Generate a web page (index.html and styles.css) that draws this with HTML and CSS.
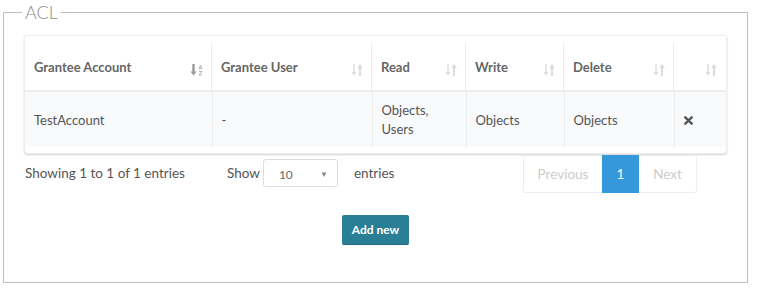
FILE: index.html
```html
<!DOCTYPE html>
<html>
<head>
<meta charset="utf-8">
<link rel="stylesheet" href="styles.css">
</head>
<body>
<fieldset class="acl">
  <legend class="acl-legend">ACL</legend>
  <div class="card">
    <table class="grid">
      <thead>
        <tr>
          <th class="c1"><span>Grantee Account</span><span class="sort active">
            <svg width="14" height="14" viewBox="0 0 14 14"><path d="M3.5 1v9" stroke="#9a9a9a" stroke-width="2.4"/><path d="M0.5 8.5h6l-3 4z" fill="#9a9a9a"/><path d="M9 6.5l1.5-4.5 1.5 4.5M9.6 5h1.8" stroke="#b5b5b5" stroke-width="1" fill="none"/><path d="M9 8.5h3l-3 3.5h3" stroke="#b5b5b5" stroke-width="1" fill="none"/></svg>
          </span></th>
          <th class="c2"><span>Grantee User</span><span class="sort"><svg width="14" height="14" viewBox="0 0 14 14"><path d="M4 1v9" stroke="#dcdcdc" stroke-width="1.4"/><path d="M1.5 9h5l-2.5 3.5z" fill="#dcdcdc"/><path d="M10 13V4" stroke="#dcdcdc" stroke-width="2.2"/><path d="M7 5h6l-3-4z" fill="#dcdcdc"/></svg></span></th>
          <th class="c3"><span>Read</span><span class="sort"><svg width="14" height="14" viewBox="0 0 14 14"><path d="M4 1v9" stroke="#dcdcdc" stroke-width="1.4"/><path d="M1.5 9h5l-2.5 3.5z" fill="#dcdcdc"/><path d="M10 13V4" stroke="#dcdcdc" stroke-width="2.2"/><path d="M7 5h6l-3-4z" fill="#dcdcdc"/></svg></span></th>
          <th class="c4"><span>Write</span><span class="sort"><svg width="14" height="14" viewBox="0 0 14 14"><path d="M4 1v9" stroke="#dcdcdc" stroke-width="1.4"/><path d="M1.5 9h5l-2.5 3.5z" fill="#dcdcdc"/><path d="M10 13V4" stroke="#dcdcdc" stroke-width="2.2"/><path d="M7 5h6l-3-4z" fill="#dcdcdc"/></svg></span></th>
          <th class="c5"><span>Delete</span><span class="sort"><svg width="14" height="14" viewBox="0 0 14 14"><path d="M4 1v9" stroke="#dcdcdc" stroke-width="1.4"/><path d="M1.5 9h5l-2.5 3.5z" fill="#dcdcdc"/><path d="M10 13V4" stroke="#dcdcdc" stroke-width="2.2"/><path d="M7 5h6l-3-4z" fill="#dcdcdc"/></svg></span></th>
          <th class="c6"><span></span><span class="sort"><svg width="14" height="14" viewBox="0 0 14 14"><path d="M4 1v9" stroke="#dcdcdc" stroke-width="1.4"/><path d="M1.5 9h5l-2.5 3.5z" fill="#dcdcdc"/><path d="M10 13V4" stroke="#dcdcdc" stroke-width="2.2"/><path d="M7 5h6l-3-4z" fill="#dcdcdc"/></svg></span></th>
        </tr>
      </thead>
      <tbody>
        <tr>
          <td>TestAccount</td>
          <td>-</td>
          <td>Objects,<br>Users</td>
          <td>Objects</td>
          <td>Objects</td>
          <td class="del"><svg width="9" height="9" viewBox="0 0 9 9"><path d="M1.3 1.3l6.4 6.4M7.7 1.3l-6.4 6.4" stroke="#555" stroke-width="2.4" stroke-linecap="round"/></svg></td>
        </tr>
      </tbody>
    </table>
  </div>
  <div class="footer">
    <div class="info">Showing 1 to 1 of 1 entries</div>
    <div class="length">
      <span>Show</span>
      <div class="select"><span>10</span><span class="caret">▼</span></div>
      <span>entries</span>
    </div>
    <div class="pager">
      <span class="pg disabled">Previous</span>
      <span class="pg current">1</span>
      <span class="pg disabled">Next</span>
    </div>
  </div>
  <div class="actions">
    <button class="btn">Add new</button>
  </div>
</fieldset>
</body>
</html>
```
FILE: styles.css
```css
* { box-sizing: border-box; }
body {
  margin: 0;
  padding: 2px 13px 0 3px;
  font-family: "Lato", "Open Sans", sans-serif;
  color: #555;
  background: #fff;
}
.acl {
  margin: 0;
  border: 1px solid #c0c0c0;
  padding: 13px 20px 34px 20px;
  height: 281px;
}
.acl-legend {
  margin-left: -2px;
  padding: 0 3px;
  font-size: 18px;
  font-weight: 300;
  color: #8d8d8d;
  line-height: 20px;
}
.card {
  border: 1px solid #eee;
  border-radius: 4px;
  box-shadow: 0 1px 2px rgba(0,0,0,0.18);
  overflow: hidden;
  padding-bottom: 6px;
  background: #fff;
}
.grid {
  width: 100%;
  border-collapse: collapse;
  font-size: 13px;
}
.grid th {
  position: relative;
  height: 55px;
  text-align: left;
  font-weight: bold;
  color: #666;
  padding: 7px 6px 0 9px;
  border-bottom: 2px solid #ececec;
  vertical-align: middle;
  background: #fff;
}
.grid th::after {
  content: "";
  position: absolute;
  right: 0;
  top: 7px;
  bottom: 0;
  border-right: 1px solid #ececec;
}
.grid th:last-child::after { display: none; }
.grid td:last-child { border-right: none; }
.sort {
  position: absolute;
  right: 8px;
  top: 27px;
  width: 14px;
  height: 14px;
}
.sort svg { display: block; }
.c1 { width: 187px; }
.c2 { width: 160px; }
.c3 { width: 94px; }
.c4 { width: 98px; }
.c5 { width: 110px; }
.grid td {
  background: #f9fafc;
  height: 56px;
  padding: 1px 9px 0 9px;
  border-right: 1px solid #ececec;
  line-height: 19px;
  vertical-align: middle;
}
.grid td.del { padding-left: 9px; }
.grid td.del svg { display: block; }
.footer {
  display: flex;
  align-items: flex-start;
  font-size: 13.5px;
}
.info {
  margin-top: 11px;
  margin-left: 1px;
  width: 202px;
}
.length {
  display: flex;
  align-items: center;
  margin-top: 5px;
}
.length > span:first-child { margin-right: 3px; }
.select {
  width: 75px;
  height: 28px;
  border: 1px solid #ddd;
  border-radius: 3px;
  display: flex;
  align-items: center;
  justify-content: space-between;
  padding: 2px 9px 0 15px;
  font-size: 12px;
  color: #666;
  margin-right: 16px;
}
.caret { font-size: 8px; color: #888; }
.pager {
  margin-left: auto;
  margin-right: 30px;
  margin-top: 1px;
  display: flex;
  border: 1px solid #eee;
  border-radius: 3px;
  height: 38px;
}
.pg {
  display: flex;
  align-items: center;
  justify-content: center;
  font-size: 13.5px;
}
.pg.disabled { color: #ccc; }
.pg:first-child { width: 78px; }
.pg.current { width: 37px; background: #3498db; color: #fff; margin: -1px 0; height: 38px; }
.pg:last-child { width: 57px; }
.actions {
  display: flex;
  justify-content: center;
  margin-top: 22px;
}
.btn {
  font-family: "Lato", "Open Sans", sans-serif;
  background: #2a7f96;
  color: #fff;
  border: none;
  border-bottom: 1px solid #216a7d;
  border-radius: 2px;
  font-weight: bold;
  font-size: 12px;
  width: 67px;
  height: 30px;
  padding: 0;
}
```
